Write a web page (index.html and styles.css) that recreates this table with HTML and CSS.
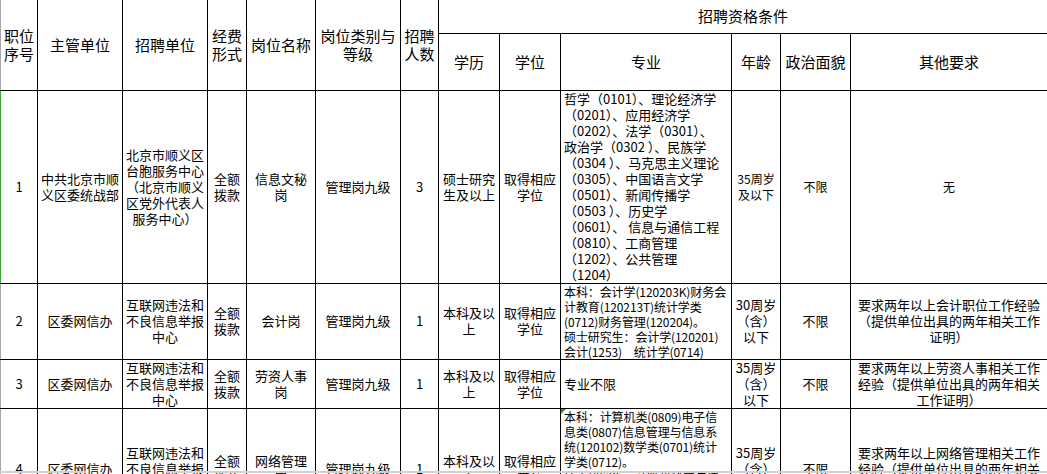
FILE: index.html
```html
<!DOCTYPE html>
<html lang="zh-CN">
<head>
<meta charset="utf-8">
<title>招聘资格条件</title>
<link rel="stylesheet" href="styles.css">
</head>
<body>
<div class="sheet">
<table class="grid">
<colgroup>
<col class="c-no"><col class="c-dept"><col class="c-unit"><col class="c-fund"><col class="c-post"><col class="c-level"><col class="c-num"><col class="c-edu"><col class="c-deg"><col class="c-major"><col class="c-age"><col class="c-pol"><col class="c-other">
</colgroup>
<thead>
<tr class="h1">
<th rowspan="2">职位<br>序号</th>
<th rowspan="2">主管单位</th>
<th rowspan="2">招聘单位</th>
<th rowspan="2">经费<br>形式</th>
<th rowspan="2">岗位名称</th>
<th rowspan="2">岗位类别与<br>等级</th>
<th rowspan="2">招聘<br>人数</th>
<th colspan="6" class="group">招聘资格条件</th>
</tr>
<tr class="h2">
<th>学历</th><th>学位</th><th>专业</th><th>年龄</th><th>政治面貌</th><th>其他要求</th>
</tr>
</thead>
<tbody>
<tr class="r1">
<td>1</td>
<td>中共北京市顺<br>义区委统战部</td>
<td>北京市顺义区<br>台胞服务中心<br>（北京市顺义<br>区党外代表人<br>服务中心）</td>
<td>全额<br>拨款</td>
<td>信息文秘<br>岗</td>
<td>管理岗九级</td>
<td>3</td>
<td>硕士研究<br>生及以上</td>
<td>取得相应<br>学位</td>
<td class="major">哲学（0101）、理论经济学<br>（0201）、应用经济学<br>（0202）、法学（0301）、<br>政治学（0302 ）、民族学<br>（0304 ）、马克思主义理论<br>（0305）、中国语言文学<br>（0501）、新闻传播学<br>（0503 ）、历史学<br>（0601）、 信息与通信工程<br>（0810）、工商管理<br>（1202）、公共管理<br>（1204）</td>
<td class="sm">35周岁<br>及以下</td>
<td class="sm">不限</td>
<td class="sm">无</td>
</tr>
<tr class="r2">
<td>2</td>
<td>区委网信办</td>
<td>互联网违法和<br>不良信息举报<br>中心</td>
<td>全额<br>拨款</td>
<td>会计岗</td>
<td>管理岗九级</td>
<td>1</td>
<td>本科及以<br>上</td>
<td>取得相应<br>学位</td>
<td class="major dense">本科：会计学(120203K)财务会<br>计教育(120213T)统计学类<br>(0712)财务管理(120204)。<br>硕士研究生：会计学(120201)<br>会计(1253)　统计学(0714)</td>
<td>30周岁<br>（含）<br>以下</td>
<td>不限</td>
<td>要求两年以上会计职位工作经验<br>（提供单位出具的两年相关工作<br>证明）</td>
</tr>
<tr class="r3">
<td>3</td>
<td>区委网信办</td>
<td>互联网违法和<br>不良信息举报<br>中心</td>
<td>全额<br>拨款</td>
<td>劳资人事<br>岗</td>
<td>管理岗九级</td>
<td>1</td>
<td>本科及以<br>上</td>
<td>取得相应<br>学位</td>
<td class="major">专业不限</td>
<td>35周岁<br>（含）<br>以下</td>
<td>不限</td>
<td>要求两年以上劳资人事相关工作<br>经验（提供单位出具的两年相关<br>工作证明）</td>
</tr>
<tr class="r4">
<td>4</td>
<td>区委网信办</td>
<td>互联网违法和<br>不良信息举报<br>中心</td>
<td>全额<br>拨款</td>
<td>网络管理<br>岗</td>
<td>管理岗九级</td>
<td>1</td>
<td>本科及以<br>上</td>
<td>取得相应<br>学位</td>
<td class="major dense flagged">本科：计算机类(0809)电子信<br>息类(0807)信息管理与信息系<br>统(120102)数学类(0701)统计<br>学类(0712)。<br>硕士研究生：计算机科学与技<br>术(0812)信息与通信工程<br>(0810)数学(0701)统计学<br>(0714)</td>
<td>35周岁<br>（含）<br>以下</td>
<td>不限</td>
<td>要求两年以上网络管理相关工作<br>经验（提供单位出具的两年相关<br>工作证明）</td>
</tr>
</tbody>
</table>
</div>
<div class="scroll-edge"><span class="edge-a"></span><span class="edge-gap"></span><span class="edge-b"></span></div>
</body>
</html>
```
FILE: styles.css
```css
html, body {
  margin: 0;
  padding: 0;
  background: #fff;
}
body {
  width: 1047px;
  height: 474px;
  overflow: hidden;
  font-family: "Noto Sans CJK SC", "Liberation Sans", sans-serif;
  color: #000;
}
.sheet {
  width: 1047px;
}
.grid {
  width: 1047px;
  border-collapse: collapse;
  table-layout: fixed;
}
.c-no { width: 37px; }
.c-dept { width: 85px; }
.c-unit { width: 85px; }
.c-fund { width: 39px; }
.c-post { width: 69px; }
.c-level { width: 85px; }
.c-num { width: 38px; }
.c-edu { width: 61px; }
.c-deg { width: 61px; }
.c-major { width: 171px; }
.c-age { width: 49px; }
.c-pol { width: 70px; }
.c-other { width: 197px; }

.grid th,
.grid td {
  border: 1px solid #000;
  padding: 0 1px;
  text-align: center;
  vertical-align: middle;
  white-space: nowrap;
  overflow: hidden;
}
.grid th {
  font-weight: normal;
  font-size: 15px;
  line-height: 18px;
}
.grid td {
  font-size: 13px;
  line-height: 16px;
}
.grid thead tr.h1 th {
  border-top: none;
}
.grid th:first-child,
.grid td:first-child {
  border-left: 1px solid #a8a8a8;
}
.grid tr.r1 td:first-child {
  border-left: 1px solid #3fa53f;
}
.h1 { height: 33px; }
.h2 { height: 57px; }
.r1 { height: 192px; }
.r2 { height: 75px; }
.r3 { height: 48px; }
.r4 { height: 120px; }

.grid td.major {
  text-align: left;
  padding-left: 3px;
}
.grid td.dense {
  font-size: 12px;
  line-height: 15px;
  letter-spacing: -0.1px;
  vertical-align: top;
}
.grid td.sm {
  font-size: 12px;
}
.grid td.flagged {
  position: relative;
}
.grid td.flagged::before {
  content: "";
  position: absolute;
  left: 0;
  top: 0;
  width: 0;
  height: 0;
  border-top: 5px solid #2e9a2e;
  border-right: 5px solid transparent;
}
.scroll-edge {
  position: fixed;
  left: 0;
  top: 471px;
  width: 1047px;
  height: 2px;
  display: flex;
}
.edge-a {
  width: 87px;
  background: #d0d0d0;
}
.edge-gap {
  width: 79px;
}
.edge-b {
  flex: 1;
  background: #d0d0d0;
}
```
